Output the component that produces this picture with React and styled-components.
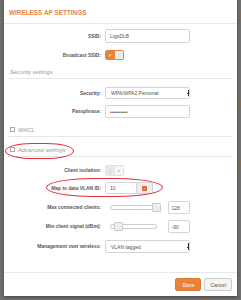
import React from 'react';
import styled, {createGlobalStyle} from 'styled-components';

const GlobalStyle = createGlobalStyle`
html, body {
  margin: 0;
  padding: 0;
  background: #6f6f6f;
  font-family: "Liberation Sans", Arial, sans-serif;
  overflow: hidden;
}
`;

const orange = '#e8843a';

const App = () => {
  return (
    <Page>
      <GlobalStyle />
      <EdgeBlob style={{top: 12}} />
      <EdgeBlob style={{top: 100}} />
      <EdgeBlob style={{top: 160}} />
      <Dialog>
        <Header>
          <Title>Wireless AP settings</Title>
        </Header>
        <Body>
          <Row $mt={5} $h={14}>
            <Label>SSID:</Label>
            <Input>LigoDLB</Input>
          </Row>
          <Row $mt={7} $h={10}>
            <Label>Broadcast SSID:</Label>
            <Toggle on />
          </Row>
          <Section $h={19}>Security settings</Section>
          <Row $mt={8} $h={12}>
            <Label>Security:</Label>
            <Select>
              WPA/WPA2 Personal
              <Caret />
            </Select>
          </Row>
          <Row $mt={6} $h={13}>
            <Label>Passphrase:</Label>
            <Input>••••••••••</Input>
          </Row>
          <Section $h={19}><Box />WACL</Section>
          <Section $h={20}><Box />Advanced settings</Section>
          <Row $mt={8} $h={11}>
            <Label>Client isolation:</Label>
            <Toggle />
          </Row>
          <Row $mt={6} $h={12}>
            <Label>Map to data VLAN ID:</Label>
            <Group>
              <GroupInput>10</GroupInput>
              <Addon><Check>✓</Check></Addon>
            </Group>
          </Row>
          <Row $mt={7} $h={13}>
            <Label>Max connected clients:</Label>
            <SliderWrap>
              <Track>
                <Thumb style={{left: 41}} />
              </Track>
              <SmallInput>128</SmallInput>
            </SliderWrap>
          </Row>
          <Row $mt={6} $h={13}>
            <Label>Min client signal (dBm):</Label>
            <SliderWrap>
              <Track>
                <Thumb style={{left: 3}} />
              </Track>
              <SmallInput>-90</SmallInput>
            </SliderWrap>
          </Row>
          <Row $mt={7} $h={13}>
            <Label>Management over wireless:</Label>
            <Select>
              VLAN tagged
              <Caret />
            </Select>
          </Row>
        </Body>
        <Footer>
          <Button $primary>Done</Button>
          <Button>Cancel</Button>
        </Footer>
        <Oval style={{left: 1, top: 143, width: 69, height: 16}} />
        <Oval style={{left: 42, top: 178, width: 117, height: 19}} />
      </Dialog>
    </Page>
  );
};

export default App;

const Page = styled.div`
position: relative;
width: 241px;
height: 300px;
background: #6f6f6f;
overflow: hidden;
`;

const EdgeBlob = styled.div`
position: absolute;
right: 0;
width: 3px;
height: 8px;
background: #8a6a4a;
opacity: 0.7;
`;

const Dialog = styled.div`
position: relative;
margin-left: 4px;
width: 233px;
height: 296px;
background: #fff;
display: flex;
flex-direction: column;
box-shadow: 0 1px 3px rgba(0,0,0,0.4);
`;

const Header = styled.div`
flex: none;
height: 24px;
border-bottom: 1px solid #e8e8e8;
display: flex;
align-items: center;
padding-left: 5px;
box-sizing: border-box;
`;

const Title = styled.div`
color: ${orange};
font-size: 6.4px;
font-weight: bold;
text-transform: uppercase;
padding-top: 2px;
`;

const Body = styled.div`
padding: 0 5px 0 4px;
display: flex;
flex-direction: column;
flex: 1;
`;

const Row = styled.div`
flex: none;
display: grid;
grid-template-columns: 93px 85px;
column-gap: 4px;
align-items: stretch;
height: ${p => p.$h}px;
margin-top: ${p => p.$mt}px;
`;

const Label = styled.div`
display: flex;
align-items: center;
justify-content: flex-end;
font-size: 4.9px;
font-weight: bold;
color: #555;
white-space: nowrap;
`;

const Input = styled.div`
box-sizing: border-box;
border: 1px solid #d4d4d4;
border-radius: 2px;
font-size: 5px;
color: #555;
padding-left: 4px;
display: flex;
align-items: center;
`;

const Select = styled(Input)`
position: relative;
padding-left: 5px;
`;

const Caret = styled.div`
position: absolute;
right: 0;
top: 2px;
bottom: 2px;
width: 1px;
background: #333;
&::after {
  content: '';
  position: absolute;
  left: -1px;
  top: 50%;
  width: 2px;
  height: 1px;
  background: #333;
}
`;

const ToggleBox = styled.div`
width: 19px;
box-sizing: border-box;
border: 1px solid ${p => p.$on ? orange : '#e2e2e2'};
border-radius: 2px;
display: flex;
overflow: hidden;
`;

const ToggleHalf = styled.div`
flex: 1;
display: flex;
align-items: center;
justify-content: center;
font-size: 5px;
background: ${p => p.$bg};
color: ${p => p.$color};
`;

const Toggle = ({on}) => (
  <ToggleBox $on={on}>
    {on ? (
      <>
        <ToggleHalf $bg={orange} $color="#fff">✓</ToggleHalf>
        <ToggleHalf $bg="#eee" $color="#ccc">|</ToggleHalf>
      </>
    ) : (
      <>
        <ToggleHalf $bg="#e8e8e8" $color="#bbb">|</ToggleHalf>
        <ToggleHalf $bg="#f7f7f7" $color="#aaa">×</ToggleHalf>
      </>
    )}
  </ToggleBox>
);

const Section = styled.div`
flex: none;
height: ${p => p.$h}px;
box-sizing: border-box;
border-bottom: 1px solid #e8e8e8;
display: flex;
align-items: flex-end;
padding: 0 0 2px 2px;
font-size: 5.8px;
line-height: 7px;
font-style: italic;
color: #999;
`;

const Box = styled.span`
display: inline-block;
width: 3px;
height: 3px;
border: 1px solid #aaa;
margin-right: 3px;
margin-bottom: 2px;
`;

const Group = styled.div`
display: flex;
width: 48px;
`;

const GroupInput = styled.div`
flex: 1;
border: 1px solid #d4d4d4;
border-radius: 2px 0 0 2px;
font-size: 5px;
color: #555;
padding-left: 4px;
display: flex;
align-items: center;
`;

const Addon = styled.div`
width: 15px;
background: #eee;
border: 1px solid #d4d4d4;
border-left: none;
border-radius: 0 2px 2px 0;
display: flex;
align-items: center;
justify-content: center;
`;

const Check = styled.div`
width: 5px;
height: 5px;
background: #d9652e;
color: #fff;
font-size: 4px;
line-height: 5px;
text-align: center;
border-radius: 1px;
`;

const SliderWrap = styled.div`
display: flex;
align-items: center;
`;

const Track = styled.div`
position: relative;
margin-left: 5px;
width: 46px;
height: 3px;
border: 1px solid #ccc;
border-radius: 2px;
background: #fff;
`;

const Thumb = styled.div`
position: absolute;
top: -3px;
width: 7px;
height: 7px;
background: #eee;
border: 1px solid #ccc;
border-radius: 1px;
`;

const SmallInput = styled.div`
margin-left: 11px;
width: 23px;
height: 13px;
box-sizing: border-box;
border: 1px solid #d4d4d4;
border-radius: 2px;
font-size: 5px;
color: #555;
padding-left: 3px;
display: flex;
align-items: center;
`;

const Footer = styled.div`
flex: none;
height: 24px;
border-top: 1px solid #e8e8e8;
display: flex;
justify-content: flex-end;
align-items: flex-start;
gap: 3px;
padding: 5px 5px 0 0;
box-sizing: border-box;
`;

const Button = styled.div`
height: 13px;
padding: 0 ${p => p.$primary ? 6 : 5}px;
box-sizing: border-box;
border: 1px solid ${p => p.$primary ? '#dd7a2e' : '#ccc'};
border-radius: 2px;
background: ${p => p.$primary ? orange : '#f4f4f4'};
color: ${p => p.$primary ? '#fff' : '#555'};
font-size: 5px;
display: flex;
align-items: center;
`;

const Oval = styled.div`
position: absolute;
border: 1px solid #e0303a;
border-radius: 40% / 50%;
box-sizing: border-box;
`;
